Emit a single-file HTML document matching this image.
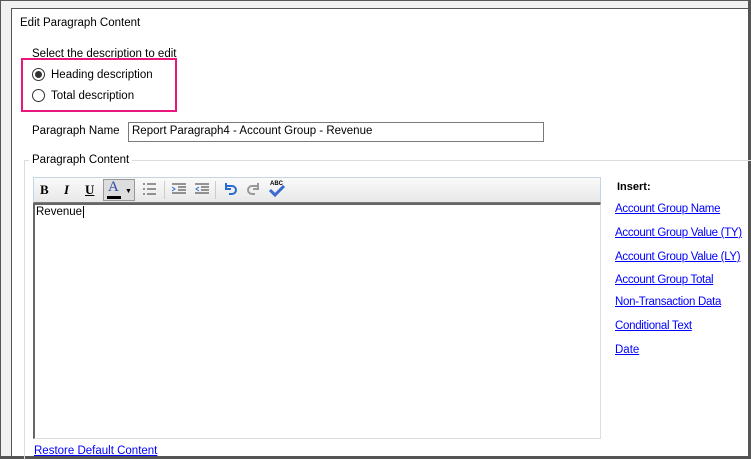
<!DOCTYPE html>
<html><head><style>
*{margin:0;padding:0;box-sizing:border-box}
body{width:751px;height:459px;overflow:hidden;background:#fff;font-family:"Liberation Sans",sans-serif;font-size:11.5px;line-height:15px;color:#000;position:relative}
.a{position:absolute;white-space:nowrap}
.lnk{color:#00f;text-decoration:underline}
</style></head><body>
<div class="a" style="left:0;top:0;width:751px;height:459px;border:1px solid #555;background:#f0f0f0"></div>
<div class="a" style="left:11px;top:8px;width:738px;height:450px;border:1px solid #555;border-right:none;border-bottom:none;background:#fff"></div>
<div class="a" style="left:748px;top:0;width:3px;height:459px;background:#555"></div>
<div class="a" style="left:0;top:456px;width:751px;height:3px;background:#555"></div>
<div class="a" style="left:20px;top:16px">Edit Paragraph Content</div>
<div class="a" style="left:32px;top:47px">Select the description to edit</div>
<div class="a" style="left:21px;top:58px;width:156px;height:54px;border:2px solid #e8177e;background:#fff"></div>
<div class="a" style="left:32px;top:68px;width:13px;height:13px;border:1px solid #333;border-radius:50%;background:#fff"></div>
<div class="a" style="left:35px;top:71px;width:7px;height:7px;border-radius:50%;background:#333"></div>
<div class="a" style="left:51px;top:68px">Heading description</div>
<div class="a" style="left:32px;top:89px;width:13px;height:13px;border:1px solid #333;border-radius:50%;background:#fff"></div>
<div class="a" style="left:51px;top:89px">Total description</div>
<div class="a" style="left:32px;top:124px">Paragraph Name</div>
<div class="a" style="left:128px;top:122px;width:416px;height:20px;border:1px solid #7a7a7a;padding:1px 3px">Report Paragraph4 - Account Group - Revenue</div>
<div class="a" style="left:24px;top:160px;width:730px;height:300px;border:1px solid #dcdcdc;border-right:none;border-bottom:none"></div>
<div class="a" style="left:29px;top:153px;background:#fff;padding:0 3px">Paragraph Content</div>
<div class="a" style="left:33px;top:177px;width:568px;height:26px;background:linear-gradient(#fafafa,#e8e8e8);border:1px solid #c5d5e5;border-bottom:1px solid #777"></div>
<div class="a" style="left:40px;top:182px;font-family:'Liberation Serif',serif;font-weight:bold;font-size:13px">B</div>
<div class="a" style="left:64px;top:182px;font-family:'Liberation Serif',serif;font-weight:bold;font-style:italic;font-size:13px">I</div>
<div class="a" style="left:85px;top:182px;font-family:'Liberation Serif',serif;font-weight:bold;text-decoration:underline;font-size:13px">U</div>
<div class="a" style="left:103px;top:179px;width:32px;height:22px;border:1px solid #999;background:#ddd"></div>
<div class="a" style="left:108px;top:180px;font-family:'Liberation Serif',serif;font-size:15px;color:#2a4aa8">A</div>
<div class="a" style="left:107px;top:196px;width:14px;height:3px;background:#000"></div>
<div class="a" style="left:125px;top:184px;font-size:7px">▼</div>
<svg class="a" style="left:142px;top:182px" width="16" height="14"><g stroke="#333"><path d="M1 2h2M1 7h2M1 12h2M5 2h9M5 7h9M5 12h9"/></g></svg>
<div class="a" style="left:164px;top:181px;width:1px;height:18px;background:#ccc"></div>
<svg class="a" style="left:171px;top:181px" width="16" height="16"><path d="M1 3h14M7 6h8M7 9h8M1 12h14" stroke="#333" fill="none"/><path d="M1 6l3 2-3 2" stroke="#2a6cd0" fill="none"/></svg>
<svg class="a" style="left:194px;top:181px" width="16" height="16"><path d="M1 3h14M7 6h8M7 9h8M1 12h14" stroke="#333" fill="none"/><path d="M5 6l-3 2 3 2" stroke="#2a6cd0" fill="none"/></svg>
<div class="a" style="left:215px;top:181px;width:1px;height:18px;background:#ccc"></div>
<svg class="a" style="left:222px;top:181px" width="16" height="16"><path d="M4 5h6a4 4 0 0 1 0 8h-3M4 2v6h5" stroke="#2a6cd0" stroke-width="2" fill="none"/></svg>
<svg class="a" style="left:246px;top:181px" width="16" height="16"><path d="M12 5h-6a4 4 0 0 0 0 8h3M12 2v6h-5" stroke="#999" stroke-width="2" fill="none"/></svg>
<div class="a" style="left:270px;top:177px;font-size:6px;font-weight:bold">ABC</div>
<svg class="a" style="left:268px;top:185px" width="18" height="12"><path d="M2 5l5 5 9-9" stroke="#3a6ad0" stroke-width="3" fill="none"/></svg>
<div class="a" style="left:33px;top:203px;width:568px;height:236px;border:1px solid #ddd;border-left:2px solid #666;border-top:2px solid #666"></div>
<div class="a" style="left:36px;top:205px">Revenue<span style="border-left:1px solid #000;margin-left:1px"></span></div>
<div class="a" style="left:617px;top:180px;font-weight:bold;font-size:11px">Insert:</div>
<div class="a lnk" style="left:615px;top:202px;letter-spacing:-0.3px">Account Group Name</div>
<div class="a lnk" style="left:615px;top:226px;letter-spacing:-0.3px">Account Group Value (TY)</div>
<div class="a lnk" style="left:615px;top:250px;letter-spacing:-0.3px">Account Group Value (LY)</div>
<div class="a lnk" style="left:615px;top:273px;letter-spacing:-0.3px">Account Group Total</div>
<div class="a lnk" style="left:615px;top:295px;letter-spacing:-0.3px">Non-Transaction Data</div>
<div class="a lnk" style="left:615px;top:319px;letter-spacing:-0.3px">Conditional Text</div>
<div class="a lnk" style="left:615px;top:343px">Date</div>
<div class="a lnk" style="left:34px;top:444px">Restore Default Content</div>
</body></html>
